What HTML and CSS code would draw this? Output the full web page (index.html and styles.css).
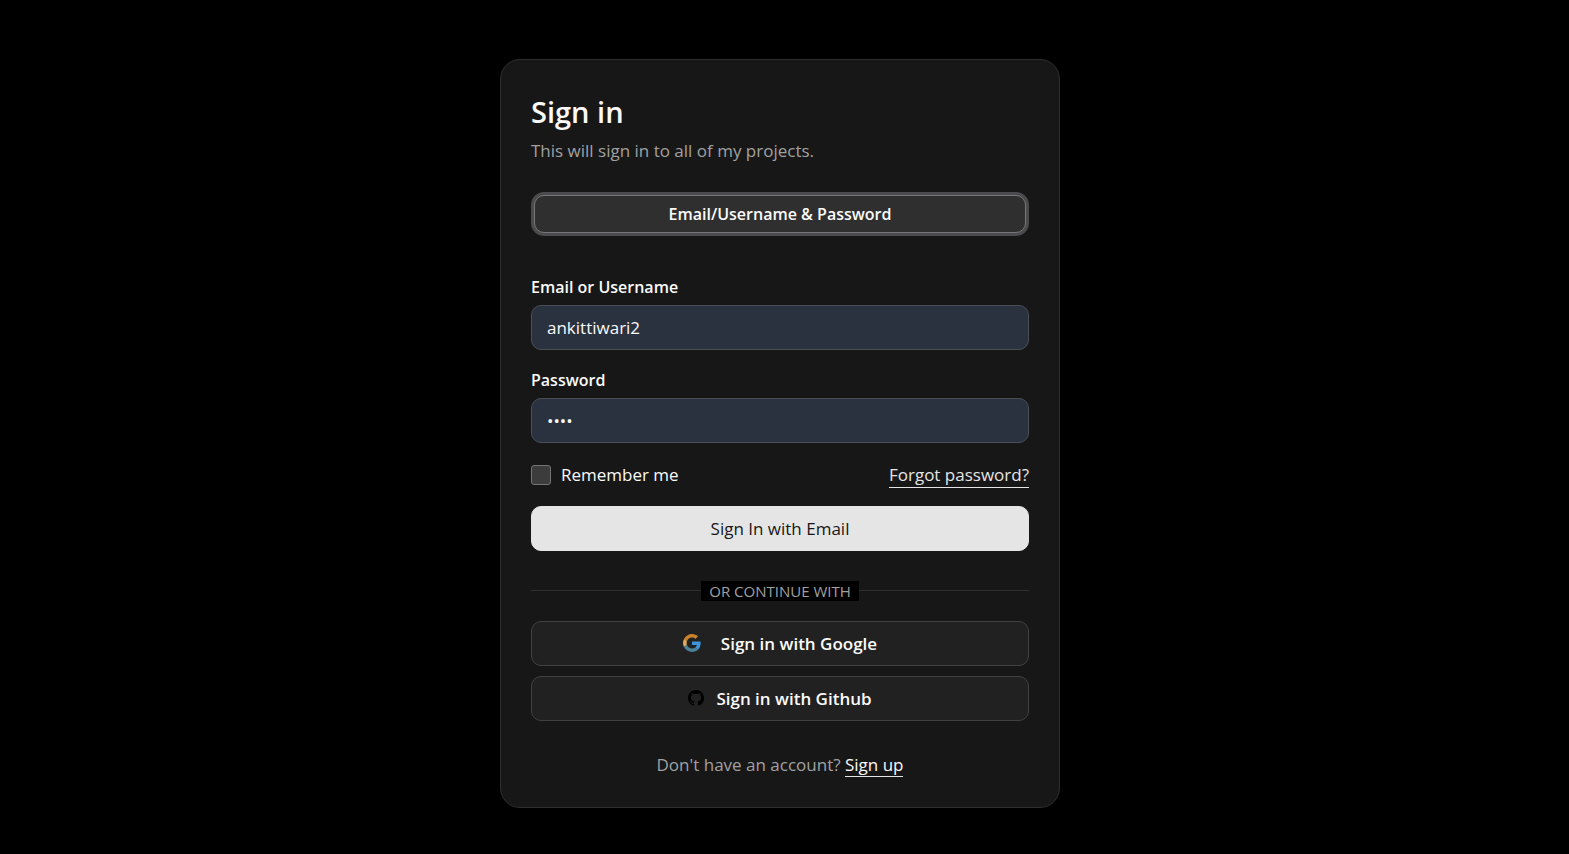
FILE: index.html
```html
<!DOCTYPE html>
<html lang="en">
<head>
    <meta charset="UTF-8">
    <meta name="viewport" content="width=device-width, initial-scale=1.0">
    <title>Sign in</title>
    <link rel="stylesheet" href="styles.css">
</head>
<body>
    <main class="card">
        <h1>Sign in</h1>
        <p class="subtitle">This will sign in to all of my projects.</p>

        <button type="button" class="tab">Email/Username &amp; Password</button>

        <form action="/signin" method="POST">
            <div class="field">
                <label for="username">Email or Username</label>
                <input type="text" id="username" name="username" value="ankittiwari2">
            </div>
            <div class="field">
                <label for="password">Password</label>
                <input type="password" id="password" name="password" value="1234">
            </div>
            <div class="options">
                <div class="remember">
                    <input type="checkbox" id="remember" name="remember">
                    <label for="remember">Remember me</label>
                </div>
                <a class="forgot" href="/forgot-password">Forgot password?</a>
            </div>
            <button type="submit" class="btn btn-primary">Sign In with Email</button>
        </form>

        <div class="divider"><span>OR CONTINUE WITH</span></div>

        <div class="providers">
            <button type="button" class="btn btn-google">
                <svg class="google-icon" viewBox="0 0 48 48" aria-hidden="true">
                    <path fill="#c9822a" d="M24 9.5c3.54 0 6.71 1.22 9.21 3.6l6.85-6.85C35.9 2.38 30.47 0 24 0 14.62 0 6.51 5.38 2.56 13.22l7.98 6.19C12.43 13.72 17.74 9.5 24 9.5z"/>
                    <path fill="#3f94dc" d="M46.98 24.55c0-1.57-.15-3.09-.38-4.55H24v9.02h12.94c-.58 2.96-2.26 5.48-4.78 7.18l7.73 6c4.51-4.18 7.09-10.36 7.09-17.65z"/>
                    <path fill="#dfa95c" d="M10.53 28.59c-.48-1.45-.76-2.99-.76-4.59s.27-3.14.76-4.59l-7.98-6.19C.92 16.46 0 20.12 0 24c0 3.88.92 7.54 2.56 10.78l7.97-6.19z"/>
                    <path fill="#4b8199" d="M24 48c6.48 0 11.93-2.13 15.89-5.81l-7.73-6c-2.15 1.45-4.92 2.3-8.16 2.3-6.26 0-11.57-4.22-13.47-9.91l-7.98 6.19C6.51 42.62 14.62 48 24 48z"/>
                </svg>
                Sign in with Google
            </button>
            <button type="button" class="btn btn-github">
                <svg class="github-icon" viewBox="0 0 16 16" aria-hidden="true">
                    <path fill="#000" d="M8 0C3.58 0 0 3.58 0 8c0 3.54 2.29 6.53 5.47 7.59.4.07.55-.17.55-.38 0-.19-.01-.82-.01-1.49-2.01.37-2.53-.49-2.69-.94-.09-.23-.48-.94-.82-1.13-.28-.15-.68-.52-.01-.53.63-.01 1.08.58 1.23.82.72 1.21 1.87.87 2.33.66.07-.52.28-.87.51-1.07-1.78-.2-3.64-.89-3.64-3.95 0-.87.31-1.59.82-2.15-.08-.2-.36-1.02.08-2.12 0 0 .67-.21 2.2.82.64-.18 1.32-.27 2-.27s1.36.09 2 .27c1.53-1.04 2.2-.82 2.2-.82.44 1.1.16 1.92.08 2.12.51.56.82 1.27.82 2.15 0 3.07-1.87 3.75-3.65 3.95.29.25.54.73.54 1.48 0 1.07-.01 1.93-.01 2.2 0 .21.15.46.55.38A8.01 8.01 0 0 0 16 8c0-4.42-3.58-8-8-8z"/>
                </svg>
                Sign in with Github
            </button>
        </div>

        <p class="signup">Don't have an account? <a href="/signup">Sign up</a></p>
    </main>
</body>
</html>
```
FILE: styles.css
```css
* {
    margin: 0;
    padding: 0;
    box-sizing: border-box;
}
body {
    font-family: 'Segoe UI', 'Open Sans', 'Noto Sans', sans-serif;
    font-size: 17px;
    line-height: 24px;
    color: #fafafa;
    background-color: #000;
    display: flex;
    justify-content: center;
    align-items: center;
    min-height: 100vh;
    padding: 12px 9px 0 0;
}
.card {
    width: 100%;
    max-width: 560px;
    padding: 32px 30px 30px;
    background-color: #171717;
    border: 1px solid #2e2e2e;
    border-radius: 20px;
}
h1 {
    font-size: 29px;
    font-weight: 600;
    line-height: 40px;
}
.subtitle {
    margin: 7px 0 32px;
    color: #a1a1a1;
}
button,
input {
    font-family: inherit;
    font-size: 17px;
    color: #fafafa;
}
button {
    font-weight: 600;
    cursor: pointer;
}
.tab {
    display: block;
    width: calc(100% - 6px);
    height: 38px;
    margin: 0 3px 42px;
    font-size: 16px;
    background-color: #2f2f2f;
    border: 1px solid #77777a;
    border-radius: 10px;
    box-shadow: 0 0 0 3px #4b4b4d;
}
.field {
    margin-bottom: 18px;
}
.field label {
    display: block;
    margin-bottom: 6px;
    font-size: 16px;
    font-weight: 600;
}
.field input {
    display: block;
    width: 100%;
    height: 45px;
    padding: 0 15px;
    background-color: #2b323f;
    border: 1px solid #4a4e57;
    border-radius: 10px;
}
.field input:focus {
    border-color: #77777a;
    outline: none;
}
.options {
    display: flex;
    justify-content: space-between;
    align-items: center;
    margin: 20px 0 18px;
}
.remember {
    display: flex;
    align-items: center;
    gap: 10px;
}
.remember input {
    appearance: none;
    width: 20px;
    height: 20px;
    background-color: #3c3c3c;
    border: 1px solid #747476;
    border-radius: 3px;
}
.remember input:checked {
    background-color: #e5e5e5;
}
a {
    color: #fafafa;
    text-decoration: none;
    border-bottom: 1px solid #e5e5e5;
}
a.forgot {
    color: #e5e5e5;
}
.btn {
    display: flex;
    justify-content: center;
    align-items: center;
    width: 100%;
    height: 45px;
    background-color: #212121;
    border: 1px solid #414141;
    border-radius: 10px;
}
.btn-primary {
    font-weight: 500;
    color: #171717;
    background-color: #e5e5e5;
    border-color: #e5e5e5;
}
.divider {
    display: flex;
    align-items: center;
    margin: 30px 0 20px;
    font-size: 15px;
    line-height: 20px;
    color: #a1a1a1;
}
.divider::before,
.divider::after {
    content: "";
    flex: 1;
    border-top: 1px solid #2e2e2e;
}
.divider span {
    padding: 0 8px;
    background-color: #000;
}
.providers {
    display: grid;
    gap: 10px;
}
.btn-google {
    gap: 20px;
}
.btn-github {
    gap: 12px;
}
.google-icon {
    width: 18px;
    height: 18px;
}
.github-icon {
    width: 16px;
    height: 16px;
}
.signup {
    margin-top: 32px;
    text-align: center;
    color: #a1a1a1;
}
```
